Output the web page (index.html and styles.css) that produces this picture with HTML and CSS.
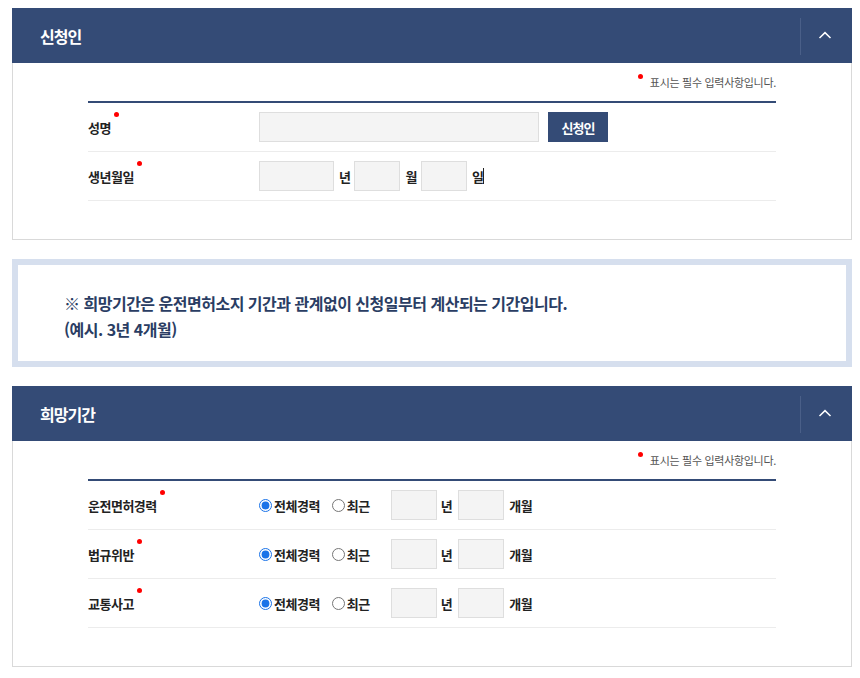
FILE: index.html
```html
<!DOCTYPE html>
<html lang="ko">
<head>
<meta charset="utf-8">
<title>신청인</title>
<link rel="stylesheet" href="styles.css">
</head>
<body>
<div class="page">
  <section class="panel">
    <div class="panel-head">
      <h2 class="panel-title">신청인</h2>
      <button class="toggle" type="button" aria-label="접기">
        <svg width="14" height="8" viewBox="0 0 14 8"><polyline points="1.5,7 7,1.6 12.5,7" fill="none" stroke="#fff" stroke-width="1.5"/></svg>
      </button>
    </div>
    <div class="panel-body">
      <p class="req-note"><span class="note-dot"></span>표시는 필수 입력사항입니다.</p>
      <div class="form-table">
        <div class="row">
          <div class="label"><span class="req">성명</span></div>
          <div class="field">
            <input class="inp inp-name" type="text">
            <button class="btn-navy" type="button">신청인</button>
          </div>
        </div>
        <div class="row">
          <div class="label"><span class="req">생년월일</span></div>
          <div class="field">
            <input class="inp inp-year" type="text"><span class="unit">년</span>
            <input class="inp inp-small" type="text"><span class="unit">월</span>
            <input class="inp inp-small" type="text"><span class="unit">일<span class="caret"></span></span>
          </div>
        </div>
      </div>
    </div>
  </section>

  <div class="notice">
    <p>※ 희망기간은 운전면허소지 기간과 관계없이 신청일부터 계산되는 기간입니다.<br>(예시. 3년 4개월)</p>
  </div>

  <section class="panel">
    <div class="panel-head">
      <h2 class="panel-title">희망기간</h2>
      <button class="toggle" type="button" aria-label="접기">
        <svg width="14" height="8" viewBox="0 0 14 8"><polyline points="1.5,7 7,1.6 12.5,7" fill="none" stroke="#fff" stroke-width="1.5"/></svg>
      </button>
    </div>
    <div class="panel-body">
      <p class="req-note"><span class="note-dot"></span>표시는 필수 입력사항입니다.</p>
      <div class="form-table">
        <div class="row">
          <div class="label"><span class="req">운전면허경력</span></div>
          <div class="field">
            <label class="radio"><input type="radio" name="r1" checked>전체경력</label>
            <label class="radio radio-recent"><input type="radio" name="r1">최근</label>
            <input class="inp inp-small" type="text"><span class="unit unit-wide">년</span>
            <input class="inp inp-small" type="text"><span class="unit">개월</span>
          </div>
        </div>
        <div class="row">
          <div class="label"><span class="req">법규위반</span></div>
          <div class="field">
            <label class="radio"><input type="radio" name="r2" checked>전체경력</label>
            <label class="radio radio-recent"><input type="radio" name="r2">최근</label>
            <input class="inp inp-small" type="text"><span class="unit unit-wide">년</span>
            <input class="inp inp-small" type="text"><span class="unit">개월</span>
          </div>
        </div>
        <div class="row">
          <div class="label"><span class="req">교통사고</span></div>
          <div class="field">
            <label class="radio"><input type="radio" name="r3" checked>전체경력</label>
            <label class="radio radio-recent"><input type="radio" name="r3">최근</label>
            <input class="inp inp-small" type="text"><span class="unit unit-wide">년</span>
            <input class="inp inp-small" type="text"><span class="unit">개월</span>
          </div>
        </div>
      </div>
    </div>
  </section>
</div>
</body>
</html>
```

FILE: styles.css
```css
* { box-sizing: border-box; }

html, body {
  margin: 0;
  padding: 0;
  background: #fff;
}

body {
  font-family: "Noto Sans CJK KR", "Noto Sans", sans-serif;
  color: #222;
}

.page {
  width: 840px;
  margin: 8px 0 0 12px;
  display: flex;
  flex-direction: column;
  gap: 19px;
}

.panel {
  display: flex;
  flex-direction: column;
}

.panel-head {
  height: 55px;
  background: #344b76;
  display: flex;
  align-items: center;
  justify-content: space-between;
}

.panel-title {
  margin: 0 0 0 28px;
  font-size: 16px;
  font-weight: 700;
  letter-spacing: -1px;
  color: #fff;
  line-height: 20px;
}

.toggle {
  width: 52px;
  height: 37px;
  margin-top: 2px;
  padding: 0;
  border: 0;
  border-left: 1px solid #4a5f88;
  background: transparent;
  display: flex;
  align-items: center;
  justify-content: center;
}

.toggle svg { display: block; margin-top: -3px; margin-left: -4px; }

.panel-body {
  border: 1px solid #d9d9d9;
  border-top: 0;
  padding: 10px 75px 38px 75px;
}

.req-note {
  margin: 0 0 10px;
  height: 18px;
  line-height: 18px;
  font-size: 11px;
  letter-spacing: -0.3px;
  color: #555;
  display: flex;
  justify-content: flex-end;
  align-items: center;
}

.note-dot {
  width: 5px;
  height: 5px;
  border-radius: 50%;
  background: #f00;
  margin-right: 7px;
  align-self: flex-start;
  margin-top: 1px;
}

.form-table {
  border-top: 2px solid #344b76;
}

.row {
  display: flex;
  align-items: center;
  height: 49px;
  border-bottom: 1px solid #ececec;
}

.label {
  width: 171px;
  flex: none;
  font-size: 13px;
  font-weight: 700;
  letter-spacing: -0.5px;
  color: #222;
}

.req {
  position: relative;
}

.req::after {
  content: "";
  position: absolute;
  right: -8px;
  top: -6px;
  width: 5px;
  height: 5px;
  border-radius: 50%;
  background: #f00;
}

.field {
  display: flex;
  align-items: center;
  font-size: 13px;
  font-weight: 700;
  letter-spacing: -0.5px;
  color: #222;
}

.inp {
  height: 30px;
  border: 1px solid #dedede;
  background: #f4f4f4;
  padding: 0 6px;
  margin: 0;
  outline: none;
  font: inherit;
}

.inp-name { width: 280px; }
.inp-year { width: 75px; }
.inp-small { width: 46px; }

.btn-navy {
  margin-left: 9px;
  width: 60px;
  height: 30px;
  border: 0;
  background: #344b76;
  color: #fff;
  font-family: inherit;
  font-size: 13px;
  font-weight: 700;
  letter-spacing: -1px;
  padding: 0;
}

.unit {
  margin: 0 4px 0 5px;
  display: inline-flex;
  align-items: center;
}

.unit-wide {
  margin-left: 4px;
  margin-right: 6px;
}

.caret {
  display: inline-block;
  width: 1px;
  height: 16px;
  background: #222;
}

.radio {
  display: inline-flex;
  align-items: center;
  margin-right: 12px;
}

.radio input {
  width: 13px;
  height: 13px;
  margin: 1px 2px 0 0;
  accent-color: #1a73e8;
}

.radio-recent {
  margin-right: 21px;
}

.notice {
  border: 6px solid #d6dfee;
  height: 108px;
  padding: 25px 46px 0 46px;
}

.notice p {
  margin: 0;
  font-size: 16px;
  font-weight: 700;
  letter-spacing: -0.5px;
  line-height: 26px;
  color: #2a3d63;
}
```
